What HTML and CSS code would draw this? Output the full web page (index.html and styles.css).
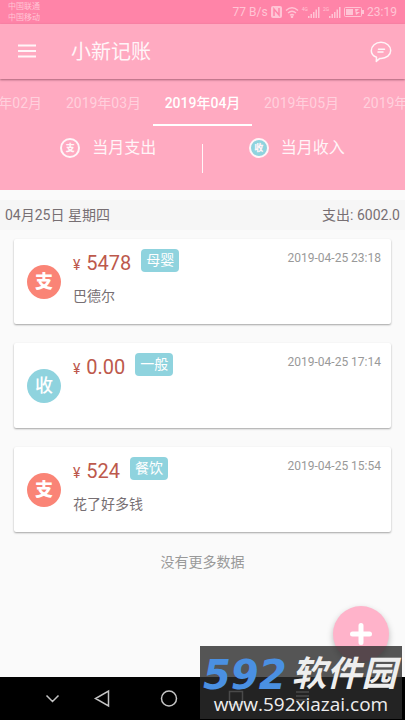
FILE: index.html
```html
<!DOCTYPE html>
<html lang="zh-CN">
<head>
<meta charset="utf-8">
<meta name="viewport" content="width=device-width, initial-scale=1">
<title>小新记账</title>
<link rel="stylesheet" href="styles.css">
</head>
<body>
<div class="status">
  <div class="carriers"><span>中国联通</span><span>中国移动</span></div>
  <div class="status-info">
    <span>77 B/s</span>
    <svg width="11" height="12" viewBox="0 0 11 12"><rect width="11" height="12" rx="2" fill="currentColor"/><path d="M3 10V3l5 6V2" fill="none" stroke="#ff84a8" stroke-width="1.5"/></svg>
    <svg width="14" height="12" viewBox="0 0 14 12" fill="none" stroke="currentColor" stroke-width="1.4"><path d="M1 4.500Q7-.8 13 4.500M3 7q4-3.500 8 0M5 9.300q2-1.600 4 0"/><circle cx="7" cy="10.800" r=".6"/></svg>
    <span class="signal"><small>4G</small><svg width="12" height="11" viewBox="0 0 12 11" fill="currentColor"><path d="M0 9h1.500v2H0zM2.500 7H4v4H2.500zM5 5h1.500v6H5zM7.500 2.500H9V11H7.500zM10 0h1.500v11H10z"/></svg></span>
    <span class="signal"><small>2G</small><svg width="12" height="11" viewBox="0 0 12 11" fill="currentColor"><path d="M0 9h1.500v2H0zM2.500 7H4v4H2.500zM5 5h1.500v6H5zM7.500 2.500H9V11H7.500zM10 0h1.500v11H10z"/></svg></span>
    <svg width="20" height="10" viewBox="0 0 20 10"><rect x=".5" y=".5" width="17" height="9" rx="1" fill="none" stroke="currentColor"/><path d="M2 2h7v6H2zM11 2h4l-3 3h4l-4 3zM18 3h2v4h-2z" fill="currentColor"/></svg>
    <span class="clock">23:19</span>
  </div>
</div>
<header class="appbar">
  <button class="icon-btn" aria-label="菜单"><svg width="20" height="16" viewBox="0 0 20 16" fill="currentColor"><path d="M1 .5h18v2H1zM1 6h18v2H1zM1 11.500h18v2H1z"/></svg></button>
  <h1>小新记账</h1>
  <button class="icon-btn" aria-label="消息"><svg width="22" height="22" viewBox="0 0 22 22" fill="none" stroke="currentColor" stroke-width="1.500" stroke-linejoin="round" stroke-linecap="round"><path d="M6.500 16.300C3.500 15 1.300 12.700 1.300 9.700 1.300 5 5.600 1.300 11 1.300s9.700 3.700 9.700 8.200-4.300 8-9.700 8l-1.200-.1-3.500 3zM8.500 8.200h6M8 11h5"/></svg></button>
</header>
<section class="overview">
  <nav class="months">
    <a href="#m02">2019年02月</a><a href="#m03">2019年03月</a><a href="#m04" class="active">2019年04月</a><a href="#m05">2019年05月</a><a href="#m06">2019年06月</a>
  </nav>
  <div class="totals">
    <div class="total"><span class="mini">支</span>当月支出</div>
    <div class="total income"><span class="mini mini-in">收</span>当月收入</div>
  </div>
</section>
<main>
  <div class="day"><span>04月25日 星期四</span><span>支出: 6002.0</span></div>
  <ul class="records">
    <li class="card">
      <span class="kind">支</span>
      <div class="detail"><div class="line"><span class="amount"><small>¥</small>5478</span><span class="tag">母婴</span></div><p>巴德尔</p></div>
      <time>2019-04-25 23:18</time>
    </li>
    <li class="card">
      <span class="kind kind-in">收</span>
      <div class="detail"><div class="line"><span class="amount"><small>¥</small>0.00</span><span class="tag">一般</span></div></div>
      <time>2019-04-25 17:14</time>
    </li>
    <li class="card">
      <span class="kind">支</span>
      <div class="detail"><div class="line"><span class="amount"><small>¥</small>524</span><span class="tag">餐饮</span></div><p>花了好多钱</p></div>
      <time>2019-04-25 15:54</time>
    </li>
  </ul>
  <p class="end">没有更多数据</p>
</main>
<button class="fab" aria-label="添加"><svg width="22" height="22" viewBox="0 0 22 22" stroke="#fff" stroke-width="5" stroke-linecap="round"><path d="M11 2.500v17M2.500 11h17"/></svg></button>
<div class="sysnav">
  <svg viewBox="0 0 405 43" fill="none" stroke="#c4c4c4" stroke-width="1.500"><path d="M46.500 18.500l6 6 6-6M108.500 14v15L95.500 21.500zM229.500 14.500h13v13h-13zM296 15h13M296 19h13M296 23h13"/><circle cx="169" cy="21.500" r="7.500"/></svg>
</div>
<div class="mark">
  <div class="mark-name"><span class="mark-num">592</span><span class="mark-word">软件园</span></div>
  <div class="mark-url">www.592xiazai.com</div>
</div>
</body>
</html>
```
FILE: styles.css
```css
* { box-sizing: border-box; }
body {
  margin: 0;
  min-height: 100vh;
  display: flex;
  flex-direction: column;
  position: relative;
  overflow-x: hidden;
  background: #fafafa;
  color: #776f73;
  font: 14px/20px Roboto, "Noto Sans CJK SC", sans-serif;
}
h1, p, ul { margin: 0; padding: 0; font-weight: 400; }
button { border: 0; padding: 0; background: none; color: inherit; }
a { color: inherit; text-decoration: none; }
svg { display: block; flex: none; }

.status {
  height: 24px;
  padding: 0 8px;
  display: flex;
  justify-content: space-between;
  align-items: center;
  background: #ff84a8;
  color: #ffc4d5;
}
.carriers { display: flex; flex-direction: column; font-size: 8px; line-height: 11px; }
.status-info { display: flex; align-items: center; gap: 3px; font-size: 12px; }
.signal { display: flex; }
.signal small { font-size: 5px; line-height: 5px; }

.appbar {
  height: 55px;
  padding: 0 13px 0 17px;
  display: flex;
  align-items: center;
  background: #ffaac1;
  color: #fff5f8;
  box-shadow: 0 1px 2px rgba(110, 50, 70, .6);
  z-index: 1;
}
.appbar h1 { flex: 1; margin-left: 34px; font-size: 20px; line-height: 28px; }

.overview { height: 111px; padding-top: 1px; background: #ffaac1; color: #fff5f8; overflow: hidden; }
.months { display: flex; justify-content: center; height: 46px; }
.months a {
  flex: none;
  width: 99px;
  line-height: 46px;
  text-align: center;
  color: #ffd0dd;
}
.months .active { color: #fff; font-weight: 500; border-bottom: 2px solid #fff; }
.totals { display: flex; height: 44px; }
.total {
  flex: 1;
  display: flex;
  align-items: center;
  justify-content: center;
  gap: 12px;
  padding-left: 14px;
  font-size: 16px;
  position: relative;
}
.income { padding: 0 14px 0 0; }
.income::before {
  content: "";
  position: absolute;
  left: -1px;
  top: 18px;
  width: 1px;
  height: 29px;
  background: #fff5f8;
}
.mini {
  width: 20px;
  height: 20px;
  border: 2px solid #fff5f8;
  border-radius: 50%;
  font-size: 9px;
  font-weight: 900;
  line-height: 16px;
  text-align: center;
}
.mini-in { background: #8fd3de; }

main { flex: 1; padding-top: 10px; }
.day {
  height: 30px;
  padding: 0 5px;
  display: flex;
  justify-content: space-between;
  align-items: center;
  background: #f6f6f6;
}
.records { list-style: none; padding: 9px 14px 0; display: grid; gap: 19px; }
.card {
  height: 85px;
  padding: 0 10px 0 13px;
  display: flex;
  background: #fff;
  border-radius: 2px;
  box-shadow: 0 1px 2px rgba(0, 0, 0, .35);
}
.kind {
  align-self: center;
  width: 34px;
  height: 34px;
  border-radius: 50%;
  background: #fa8476;
  color: #fff;
  font-size: 18px;
  font-weight: 900;
  line-height: 34px;
  text-align: center;
}
.kind-in { background: #8fd3de; font-weight: 500; }
.detail { flex: 1; margin-left: 12px; padding-top: 10px; }
.line { display: flex; gap: 10px; }
.amount { color: #bd594c; font-size: 20px; line-height: 28px; }
.amount small { font-size: 14px; margin-right: 6px; }
.tag {
  height: 23px;
  padding: 0 5px;
  border-radius: 4px;
  background: #8fd3de;
  color: #fff;
  line-height: 23px;
}
.detail p { margin-top: 7px; }
.card time { margin-top: 9px; font-size: 12px; color: #999; }
.end { margin-top: 20px; text-align: center; color: #999; }

.fab {
  position: absolute;
  right: 16px;
  bottom: 58px;
  width: 56px;
  height: 56px;
  border-radius: 50%;
  background: #ffb3ca;
  box-shadow: 0 3px 6px rgba(0, 0, 0, .25);
}
.fab svg { margin: auto; }
.sysnav { height: 43px; background: #000; }
.sysnav svg { height: 43px; }

.mark {
  position: absolute;
  right: 3px;
  bottom: 1px;
  width: 202px;
  height: 73px;
  padding: 10px 3px 0;
  background: rgba(44, 44, 44, .8);
  color: #eee;
}
.mark-name { display: flex; align-items: center; height: 37px; font-style: italic; font-weight: 700; }
.mark-num { font-family: "DejaVu Sans", sans-serif; font-size: 40px; line-height: 36px; color: #4a90e2; }
.mark-word { margin-left: 5px; font-size: 35px; line-height: 36px; }
.mark-url { font: 19px/22px "Open Sans", sans-serif; text-align: center; }
```
